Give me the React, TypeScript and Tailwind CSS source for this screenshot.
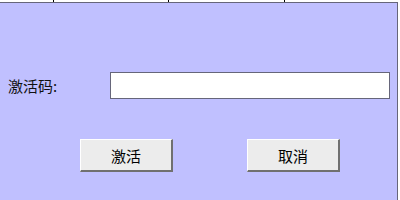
import React from "react";

export default function App() {
  const font = { fontFamily: '"Noto Sans CJK SC", "Noto Sans", sans-serif' };
  return (
    <div className="w-[400px] h-[200px] bg-white overflow-hidden flex flex-col" style={font}>
      <div className="flex h-[2px] shrink-0">
        <div className="w-[54px] border-r border-black" />
        <div className="w-[115px] border-r border-black" />
        <div className="w-[116px] border-r border-black" />
      </div>
      <div className="w-[398px] flex-1 bg-[#c0c0ff] border-t border-r border-[#66667a] flex flex-col">
        <div className="flex items-center mt-[69px] h-[27px]">
          <div className="w-[110px] pl-[8px] text-[15px] leading-none text-[#111]">激活码:</div>
          <div className="w-[280px] h-[27px] bg-white border border-[#66667a]" />
        </div>
        <div className="flex mt-[40px] pl-[80px] gap-[74px]">
          <button className="w-[93px] h-[33px] bg-[#ececec] border-t border-l border-t-white border-l-white border-r-2 border-b-2 border-r-[#707070] border-b-[#707070] text-[15px] leading-none text-black">
            激活
          </button>
          <button className="w-[93px] h-[33px] bg-[#ececec] border-t border-l border-t-white border-l-white border-r-2 border-b-2 border-r-[#707070] border-b-[#707070] text-[15px] leading-none text-black">
            取消
          </button>
        </div>
      </div>
    </div>
  );
}
